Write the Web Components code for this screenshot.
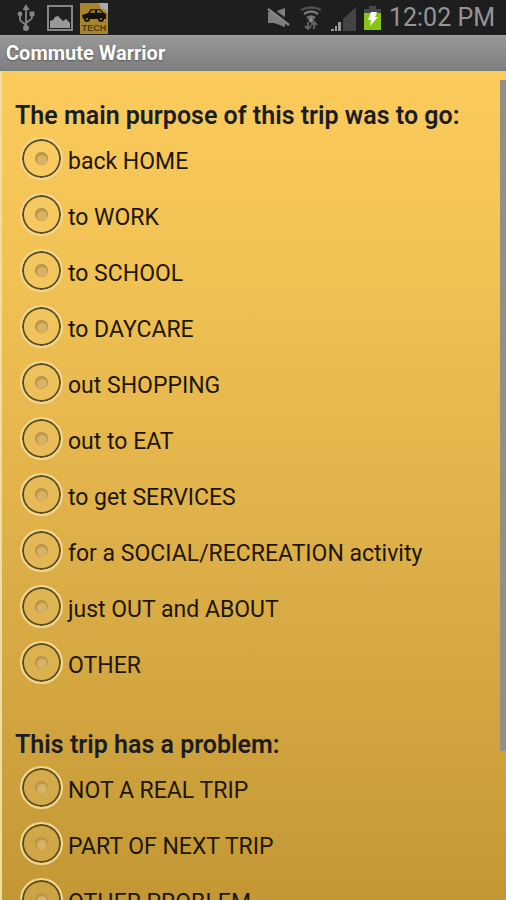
<!DOCTYPE html>
<html lang="en">
<head>
<meta charset="utf-8">
<title>Commute Warrior</title>
<style>
body { margin: 0; font-family: Roboto, "Noto Sans", sans-serif; }
</style>
</head>
<body>
<phone-screen>
  <status-bar slot="status" time="12:02 PM"></status-bar>
  <title-bar slot="title">Commute Warrior</title-bar>
  <trip-question name="purpose" options="back HOME|to WORK|to SCHOOL|to DAYCARE|out SHOPPING|out to EAT|to get SERVICES|for a SOCIAL/RECREATION activity|just OUT and ABOUT|OTHER">The main purpose of this trip was to go:</trip-question>
  <trip-question name="problem" options="NOT A REAL TRIP|PART OF NEXT TRIP|OTHER PROBLEM">This trip has a problem:</trip-question>
</phone-screen>

<template id="screen-template">
  <style>
    :host { display: flex; flex-direction: column; height: 100vh; overflow: hidden; }
    main { position: relative; flex: 1; min-height: 0; box-sizing: border-box; overflow: hidden;
      display: flex; flex-direction: column; gap: 39px; padding: 30px 12px 0;
      border-left: 2px solid #f1dca3;
      background: linear-gradient(#fbcb5c, #f0c153 25%, #dcae47 60%, #c39834); }
    .thumb { position: absolute; top: 9px; right: 0; width: 6px; height: 81%; background: #918f88; }
  </style>
  <slot name="status"></slot>
  <slot name="title"></slot>
  <main><slot></slot><div class="thumb"></div></main>
</template>

<template id="status-template">
  <style>
    :host { display: flex; justify-content: space-between; align-items: center; flex: none;
      height: 35px; padding: 0 11px 0 16px; background: #1e1e1e; color: #959595; font-size: 25px; line-height: 35px; }
    div { display: flex; align-items: center; }
    .left { gap: 5px; }
    .right { gap: 7px; }
    .picture { padding-left: 6px; }
    svg { display: block; flex: none; }
  </style>
  <div class="left">
    <svg width="20" height="35" viewBox="0 0 20 35" fill="none" stroke="#858585" stroke-width="1.8">
      <path d="M10 9v19M4 14v5q0 2 2 3l4 3M16 14v3q0 2-2 3l-4 3"/>
      <g fill="#858585" stroke="none"><path d="M10 4l3.5 6h-7z"/><circle cx="4" cy="14" r="2.4"/><path d="M13.6 11.5h4.8v4.8h-4.8z"/><circle cx="10" cy="28" r="3"/></g>
    </svg>
    <svg class="picture" width="27" height="35" viewBox="0 0 27 35">
      <rect x="1" y="6" width="24" height="24" fill="#202020" stroke="#858585" stroke-width="2"/>
      <path d="M3 28v-7l3-1 2-3 3-1 3 3 2 2 3-2 2 2 2 2v5z" fill="#989898"/>
    </svg>
    <svg width="30" height="35" viewBox="0 0 30 35">
      <path d="M1 3h28v31H1z" fill="#a8852b"/>
      <path d="M20 3h9v11q-2-5-6-5-2-2-3-6z" fill="#aaa"/>
      <path d="M3 15l6-2 3-4h9l4 4 2 1v5H4z" fill="#151307"/>
      <path d="M11 13l2-3h3v3zM18 10h3l2 3h-5z" fill="#8c7024"/>
      <circle cx="8" cy="19" r="3" fill="#151307"/><circle cx="22" cy="19" r="3" fill="#151307"/>
      <circle cx="8" cy="19" r="1" fill="#a8852b"/><circle cx="22" cy="19" r="1" fill="#a8852b"/>
      <text x="15" y="31" text-anchor="middle" font-family="Liberation Sans, sans-serif" font-weight="700" font-size="9" fill="#4a3b12">TECH</text>
    </svg>
  </div>
  <div class="right">
    <svg width="26" height="35" viewBox="0 0 26 35">
      <path d="M2 12h6L19 8v19L8 23H2z" fill="#7d7d7d"/>
      <path d="M3 7l20 15" stroke="#1e1e1e" stroke-width="2.5"/>
      <path d="M2 9l21 16" stroke="#858585" stroke-width="2.4"/>
    </svg>
    <svg width="24" height="35" viewBox="0 0 24 35" fill="none" stroke="#777" stroke-width="2.4">
      <path d="M2 10q10-5 20 0" stroke="#505050"/><path d="M5 14q7-5 14 0"/><path d="M8 18q4-3 8 0"/>
      <path d="M12 17l3 3-3 3-3-3z" fill="#888" stroke="none"/>
      <path d="M9 22v7M6 26l3 3 3-3M15 29v-6M12 25l3-3 3 3" stroke="#666" stroke-width="1.8"/>
    </svg>
    <svg width="26" height="35" viewBox="0 0 26 35">
      <path d="M26 7v24H13V19z" fill="#444"/>
      <path d="M1 29h3v2H1zM5 26h2v5H5zM8 22h3v9H8z" fill="#999"/>
    </svg>
    <svg width="19" height="35" viewBox="0 0 19 35">
      <path d="M6 6h7v3h5v5H1V9h5z" fill="#484848"/><path d="M1 13h17v17H1z" fill="#86c611"/>
      <path d="M8 12h6l-2 5h3L7 26l1-6H5z" fill="#fff"/>
    </svg>
    <span class="clock"></span>
  </div>
</template>

<template id="title-template">
  <style>
    :host { display: block; flex: none; box-sizing: border-box; height: 36px; padding: 0 6px;
      border-top: 1px solid #a0a0a0; border-bottom: 1px solid #72807d;
      background: linear-gradient(#979797, #7f7f7f); }
    h1 { margin: 0; color: #fff; font-size: 20px; line-height: 35px; font-weight: 700; text-shadow: 0 1px 2px #555; }
  </style>
  <h1><slot></slot></h1>
</template>

<template id="question-template">
  <style>
    :host { display: block; flex: none; }
    fieldset { margin: 0; padding: 0; border: 0; min-width: 0; }
    legend { padding: 0 1px; color: #1b1d25; font-size: 25px; line-height: 30px; font-weight: 600; }
    label { display: flex; align-items: center; gap: 5px; box-sizing: border-box; height: 56px; padding: 0 0 2px 6px; color: #1d1604; font-size: 23px; }
    label span { padding-top: 6px; }
    input { appearance: none; flex: none; box-sizing: border-box; width: 43px; height: 43px; margin: 0;
      border: 2px solid #f0d694; border-radius: 50%;
      background: radial-gradient(circle at 20px 21px, #d9b265 0 4px, transparent 6px),
        radial-gradient(circle, #b8944c 0 6px, #ffe09a28 7px 17px, #5d4c1e 18px 19px, #f5dc9888 20px);
      background-clip: padding-box; }
    input:checked { background: radial-gradient(circle, #5c9e12 0 6px, #ffe09a28 7px 17px, #5d4c1e 18px 19px, #f5dc9888 20px) padding-box; }
  </style>
  <fieldset><legend><slot></slot></legend></fieldset>
</template>

<script>
const attach = (host, id) => {
  const root = host.attachShadow({ mode: "open" });
  root.append(document.getElementById(id).content.cloneNode(true));
  return root;
};

customElements.define("phone-screen", class extends HTMLElement {
  constructor() { super(); attach(this, "screen-template"); }
});

customElements.define("status-bar", class extends HTMLElement {
  constructor() {
    super();
    attach(this, "status-template").querySelector(".clock").textContent = this.getAttribute("time");
  }
});

customElements.define("title-bar", class extends HTMLElement {
  constructor() { super(); attach(this, "title-template"); }
});

customElements.define("trip-question", class extends HTMLElement {
  constructor() {
    super();
    const fieldset = attach(this, "question-template").querySelector("fieldset");
    for (const text of this.getAttribute("options").split("|")) {
      const label = document.createElement("label");
      const input = document.createElement("input");
      const span = document.createElement("span");
      input.type = "radio";
      input.name = this.getAttribute("name");
      input.value = text;
      span.textContent = text;
      label.append(input, span);
      fieldset.append(label);
    }
  }
});
</script>
</body>
</html>
